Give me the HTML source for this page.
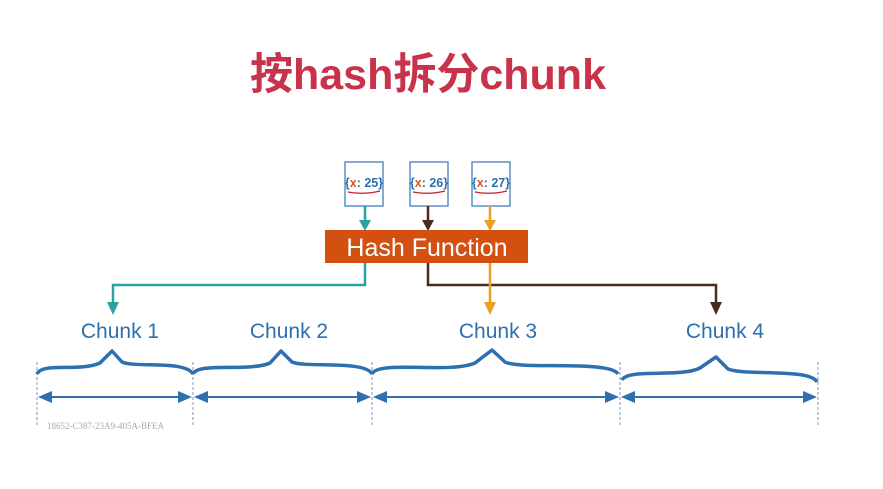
<!DOCTYPE html>
<html><head><meta charset="utf-8"><style>
html,body{margin:0;padding:0;background:#fff;width:883px;height:489px;overflow:hidden}
</style></head><body>
<svg width="883" height="489" xmlns="http://www.w3.org/2000/svg" font-family="Liberation Sans, DejaVu Sans, sans-serif">
<text x="428" y="89" text-anchor="middle" font-size="43" font-weight="bold" fill="#c8324a" font-family="Liberation Sans, Noto Sans CJK SC, sans-serif">按hash拆分chunk</text>

<g fill="#fff" stroke="#5b8fc9" stroke-width="1.5">
<rect x="345" y="162" width="38" height="44"/>
<rect x="410" y="162" width="38" height="44"/>
<rect x="472" y="162" width="38" height="44"/>
</g>
<g font-size="12.5" font-weight="bold">
<text x="364" y="187" text-anchor="middle" fill="#2e6fb0">{<tspan fill="#d9542a">x</tspan>: 25}</text>
<text x="429" y="187" text-anchor="middle" fill="#2e6fb0">{<tspan fill="#d9542a">x</tspan>: 26}</text>
<text x="491" y="187" text-anchor="middle" fill="#2e6fb0">{<tspan fill="#d9542a">x</tspan>: 27}</text>
</g>
<g stroke="#c0202a" stroke-width="1.2" fill="none">
<path d="M348 192 Q364 195 380 191"/>
<path d="M413 192 Q429 195 445 191"/>
<path d="M475 192 Q491 195 507 191"/>
</g>
<g stroke-width="2.5" fill="none">
<path d="M365 206 V222" stroke="#2aa3a0"/>
<path d="M428 206 V222" stroke="#4a2a1e"/>
<path d="M490 206 V222" stroke="#eaa020"/>
</g>
<path d="M359 220 L371 220 L365 231Z" fill="#2aa3a0"/>
<path d="M422 220 L434 220 L428 231Z" fill="#4a2a1e"/>
<path d="M484 220 L496 220 L490 231Z" fill="#eaa020"/>

<rect x="325" y="230" width="203" height="33" fill="#d35011"/>
<text x="427" y="256" text-anchor="middle" font-size="25" fill="#fff">Hash Function</text>

<g stroke-width="2.5" fill="none">
<path d="M365 263 V285 H113 V304" stroke="#2aa3a0"/>
<path d="M428 263 V285 H716 V304" stroke="#4a2a1e"/>
<path d="M490 263 V304" stroke="#eaa020"/>
</g>
<path d="M107 302 L119 302 L113 315Z" fill="#2aa3a0"/>
<path d="M710 302 L722 302 L716 315Z" fill="#4a2a1e"/>
<path d="M484 302 L496 302 L490 315Z" fill="#eaa020"/>

<g font-size="21" fill="#2e6fb0" text-anchor="middle">
<text x="120" y="338">Chunk 1</text>
<text x="289" y="338">Chunk 2</text>
<text x="498" y="338">Chunk 3</text>
<text x="725" y="338">Chunk 4</text>
</g>

<g stroke="#9aa8c0" stroke-width="1.2" stroke-dasharray="3,2">
<path d="M37 362 V425"/><path d="M193 362 V425"/><path d="M372 362 V425"/><path d="M620 362 V425"/><path d="M818 362 V425"/>
</g>
<g stroke="#2e6fb0" stroke-width="3.5" fill="none" stroke-linejoin="round">
<path d="M37 374 C42 362 80 372 100 363 L112 351 L122 362 C135 368 185 360 193 374"/>
<path d="M193 374 C198 362 250 372 270 363 L281 351 L292 362 C305 368 365 360 372 374"/>
<path d="M372 374 C378 360 450 374 475 363 L492 350 L505 362 C520 370 610 360 618 374"/>
<path d="M622 380 C628 368 680 378 700 368 L716 357 L728 369 C745 376 810 368 817 382"/>
</g>
<g stroke="#2e6fb0" stroke-width="2" fill="none">
<path d="M45 397 H184"/><path d="M201 397 H363"/><path d="M380 397 H611"/><path d="M628 397 H810"/>
</g>
<g fill="#2e6fb0">
<path d="M38 397 L52 391 L52 403Z"/><path d="M192 397 L178 391 L178 403Z"/>
<path d="M194 397 L208 391 L208 403Z"/><path d="M371 397 L357 391 L357 403Z"/>
<path d="M373 397 L387 391 L387 403Z"/><path d="M619 397 L605 391 L605 403Z"/>
<path d="M621 397 L635 391 L635 403Z"/><path d="M817 397 L803 391 L803 403Z"/>
</g>
<text x="47" y="429" font-size="9" fill="#aaa" font-family="Liberation Serif, serif">18652-C387-23A9-405A-BFEA</text>
</svg>
</body></html>
